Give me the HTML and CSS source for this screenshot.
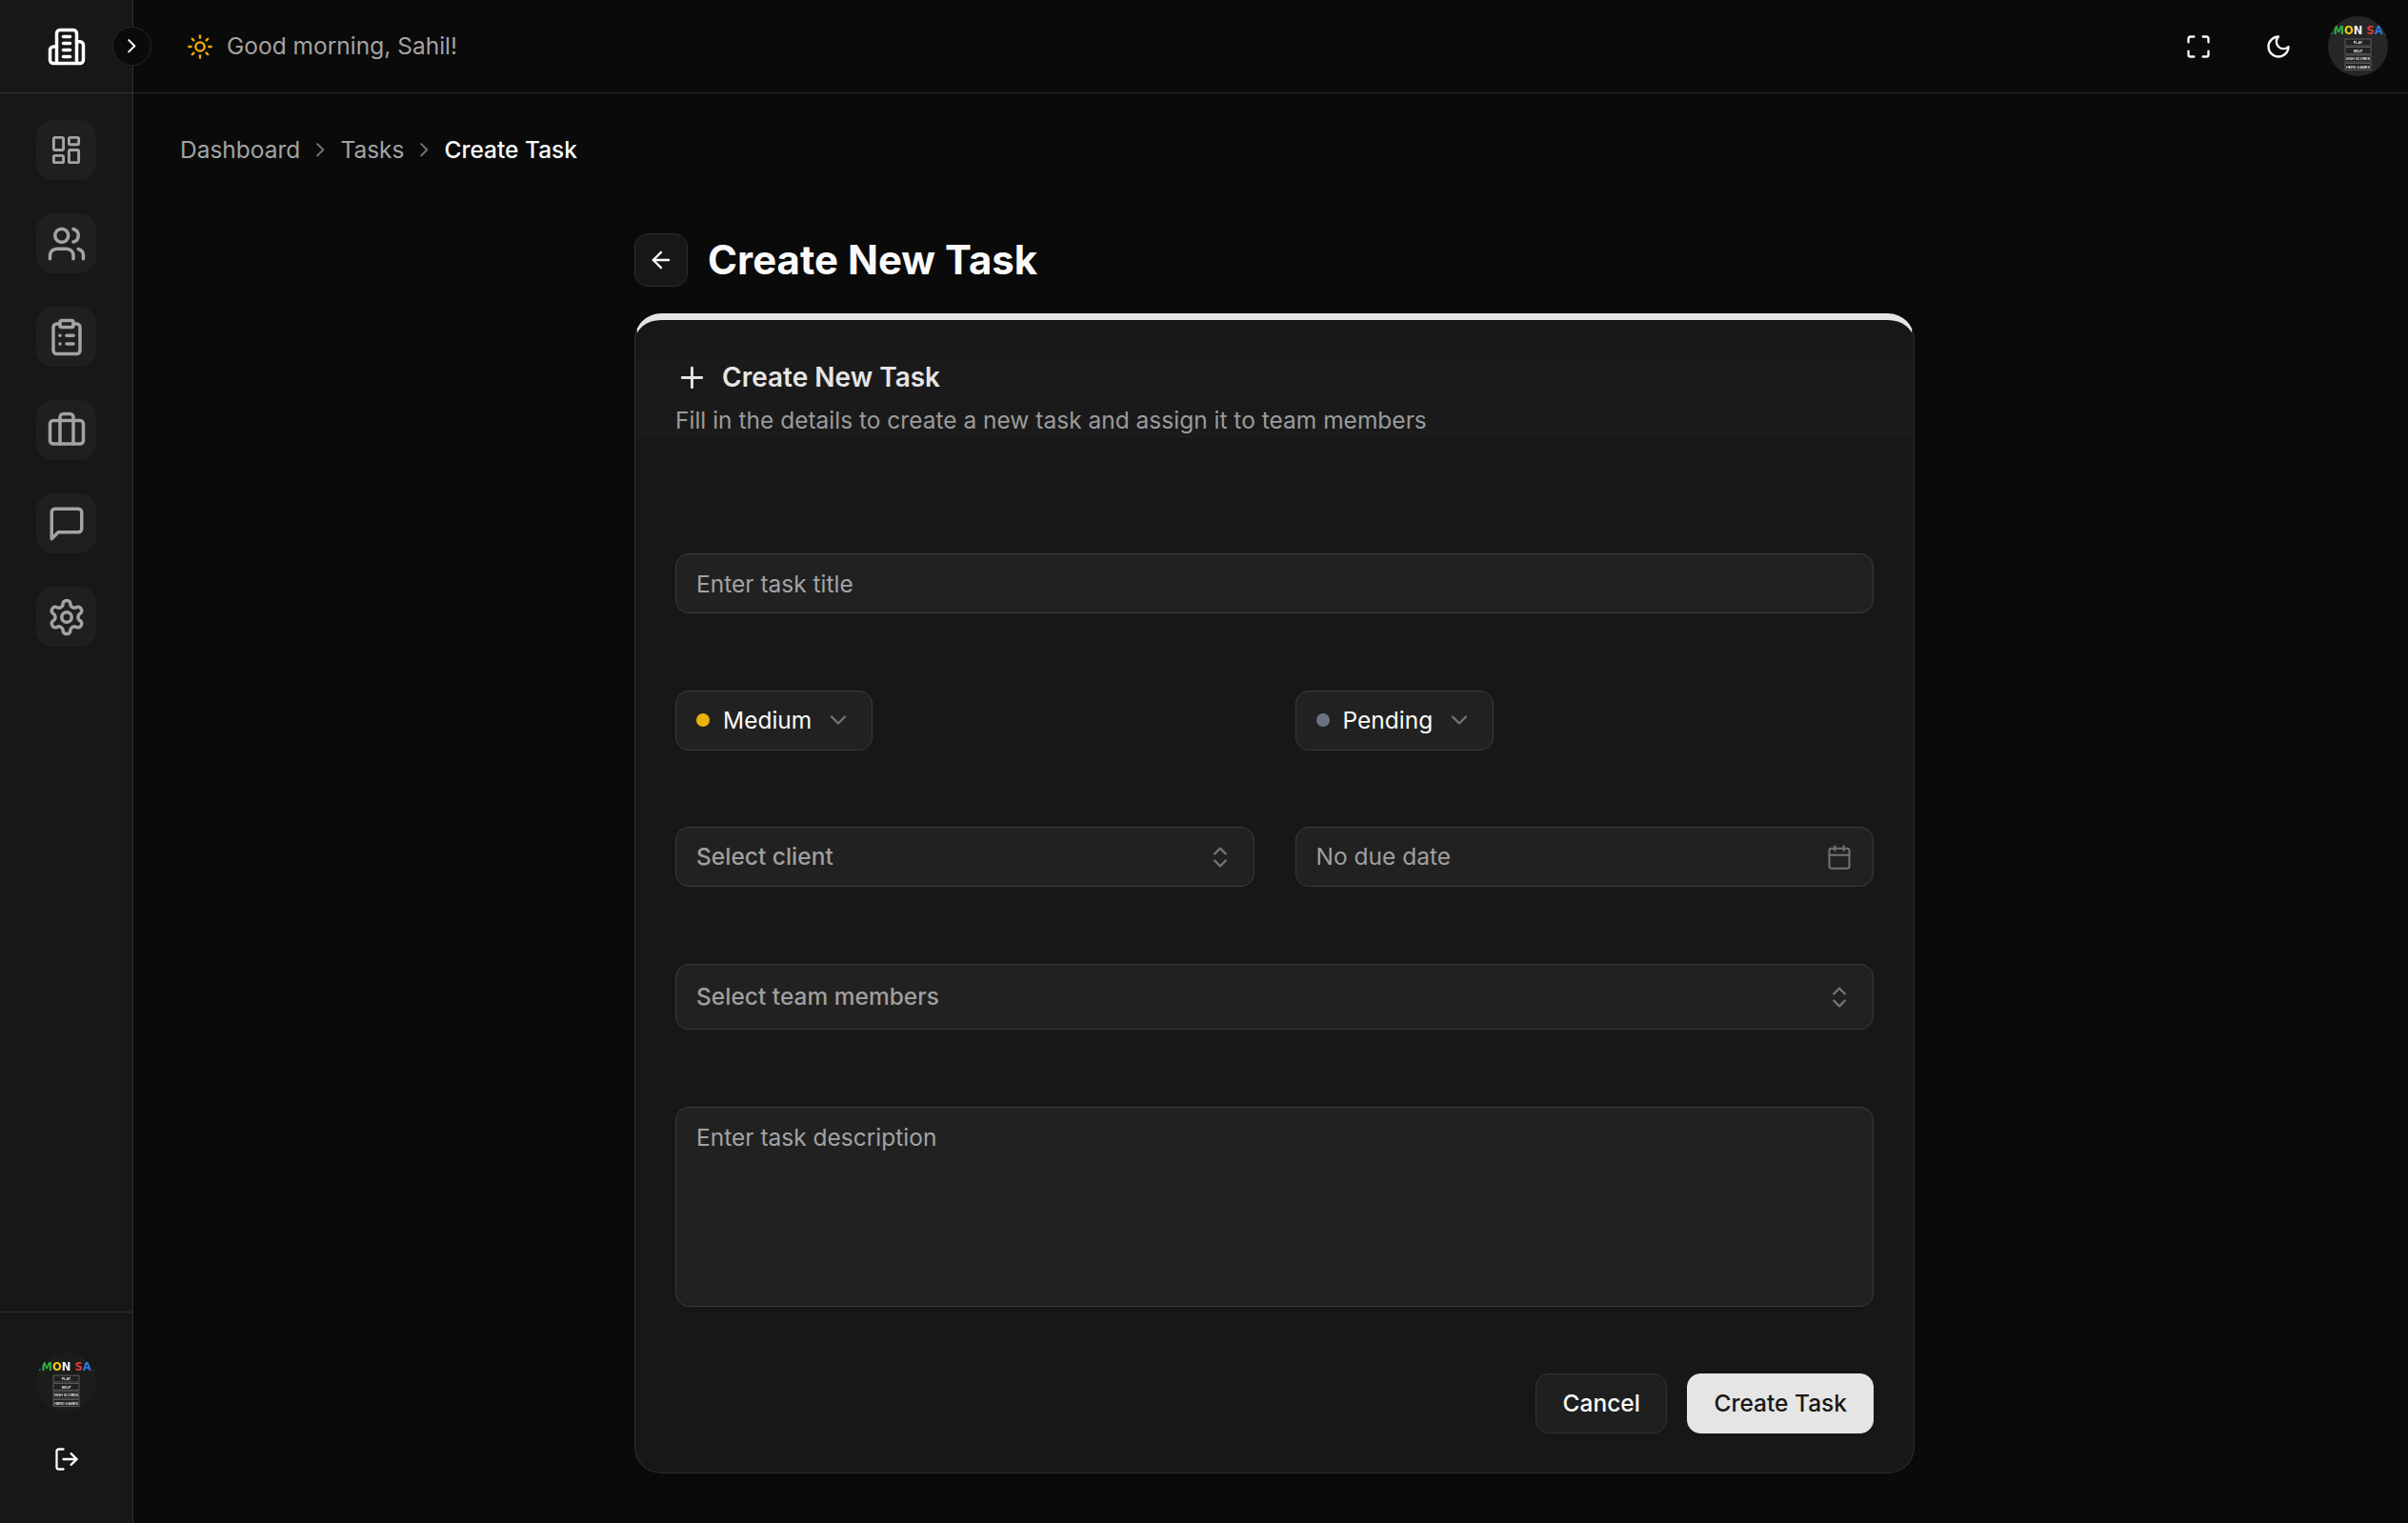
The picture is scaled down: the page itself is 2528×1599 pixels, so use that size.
FILE: index.html
```html
<!DOCTYPE html>
<html lang="en">
<head>
<meta charset="utf-8">
<title>Create New Task</title>
<link rel="stylesheet" href="styles.css">
</head>
<body>
<div class="app">
  <aside class="sidebar">
    <div class="brand">
      <svg class="icon brand-icon" viewBox="0 0 24 24"><path d="M6 22V4a2 2 0 0 1 2-2h8a2 2 0 0 1 2 2v18Z"/><path d="M6 12H4a2 2 0 0 0-2 2v6a2 2 0 0 0 2 2h2"/><path d="M18 9h2a2 2 0 0 1 2 2v9a2 2 0 0 1-2 2h-2"/><path d="M10 6h4"/><path d="M10 10h4"/><path d="M10 14h4"/><path d="M10 18h4"/></svg>
    </div>
    <nav class="nav">
      <a class="tile"><svg class="icon icon-dash" viewBox="0 0 24 24"><rect width="7" height="9" x="3" y="3" rx="1"/><rect width="7" height="5" x="14" y="3" rx="1"/><rect width="7" height="9" x="14" y="12" rx="1"/><rect width="7" height="5" x="3" y="16" rx="1"/></svg></a>
      <a class="tile"><svg class="icon icon-nav" viewBox="0 0 24 24"><path d="M16 21v-2a4 4 0 0 0-4-4H6a4 4 0 0 0-4 4v2"/><circle cx="9" cy="7" r="4"/><path d="M22 21v-2a4 4 0 0 0-3-3.87"/><path d="M16 3.13a4 4 0 0 1 0 7.75"/></svg></a>
      <a class="tile"><svg class="icon icon-nav" viewBox="0 0 24 24"><rect width="8" height="4" x="8" y="2" rx="1"/><path d="M16 4h2a2 2 0 0 1 2 2v14a2 2 0 0 1-2 2H6a2 2 0 0 1-2-2V6a2 2 0 0 1 2-2h2"/><path d="M12 11h4"/><path d="M12 16h4"/><path d="M8 11h.01"/><path d="M8 16h.01"/></svg></a>
      <a class="tile"><svg class="icon icon-nav" viewBox="0 0 24 24"><path d="M16 20V4a2 2 0 0 0-2-2h-4a2 2 0 0 0-2 2v16"/><rect width="20" height="14" x="2" y="6" rx="2"/></svg></a>
      <a class="tile"><svg class="icon icon-nav" viewBox="0 0 24 24"><path d="M21 15a2 2 0 0 1-2 2H7l-4 4V5a2 2 0 0 1 2-2h14a2 2 0 0 1 2 2z"/></svg></a>
      <a class="tile"><svg class="icon icon-nav" viewBox="0 0 24 24"><path d="M12.22 2h-.44a2 2 0 0 0-2 2v.18a2 2 0 0 1-1 1.73l-.43.25a2 2 0 0 1-2 0l-.15-.08a2 2 0 0 0-2.73.73l-.22.38a2 2 0 0 0 .73 2.73l.15.1a2 2 0 0 1 1 1.72v.51a2 2 0 0 1-1 1.74l-.15.09a2 2 0 0 0-.73 2.73l.22.38a2 2 0 0 0 2.73.73l.15-.08a2 2 0 0 1 2 0l.43.25a2 2 0 0 1 1 1.73V20a2 2 0 0 0 2 2h.44a2 2 0 0 0 2-2v-.18a2 2 0 0 1 1-1.73l.43-.25a2 2 0 0 1 2 0l.15.08a2 2 0 0 0 2.73-.73l.22-.39a2 2 0 0 0-.73-2.73l-.15-.08a2 2 0 0 1-1-1.74v-.5a2 2 0 0 1 1-1.74l.15-.09a2 2 0 0 0 .73-2.73l-.22-.38a2 2 0 0 0-2.73-.73l-.15.08a2 2 0 0 1-2 0l-.43-.25a2 2 0 0 1-1-1.73V4a2 2 0 0 0-2-2z"/><circle cx="12" cy="12" r="3"/></svg></a>
    </nav>
    <div class="side-foot">
      <div class="avatar avatar-side">
        <svg class="avatar-img" viewBox="0 0 63 63">
          <text class="art-title" x="31.5" y="19" text-anchor="middle"><tspan fill="#1d6fd0">.</tspan><tspan fill="#2fb344">M</tspan><tspan fill="#f2c811">O</tspan><tspan fill="#f2f2f2">N</tspan> <tspan fill="#e5393a">S</tspan><tspan fill="#2b78e4">A</tspan><tspan fill="#22a050">\</tspan></text>
          <rect class="art-box" x="18" y="24" width="27" height="7"/><rect class="art-box" x="18" y="32.5" width="27" height="7"/><rect class="art-box" x="18" y="41" width="27" height="7"/><rect class="art-box" x="18" y="49.5" width="27" height="7"/>
          <text class="art-label" x="31.5" y="29" text-anchor="middle">PLAY</text><text class="art-label" x="31.5" y="37.5" text-anchor="middle">HELP</text><text class="art-label" x="31.5" y="46" text-anchor="middle">HIGH SCORES</text><text class="art-label" x="31.5" y="54.5" text-anchor="middle">HERO GAMES</text>
        </svg>
      </div>
      <svg class="icon icon-28 white" viewBox="0 0 24 24"><path d="M9 21H5a2 2 0 0 1-2-2V5a2 2 0 0 1 2-2h4"/><path d="m16 17 5-5-5-5"/><path d="M21 12H9"/></svg>
    </div>
  </aside>

  <div class="column">
    <header class="topbar">
      <button class="collapse" type="button"><svg class="icon icon-24 white" viewBox="0 0 24 24"><path d="m9 18 6-6-6-6"/></svg></button>
      <div class="greeting">
        <svg class="icon icon-28 amber" viewBox="0 0 24 24"><circle cx="12" cy="12" r="4"/><path d="M12 2v2"/><path d="M12 20v2"/><path d="m4.93 4.93 1.41 1.41"/><path d="m17.66 17.66 1.41 1.41"/><path d="M2 12h2"/><path d="M20 12h2"/><path d="m6.34 17.66-1.41 1.41"/><path d="m19.07 4.93-1.41 1.41"/></svg>
        <span>Good morning, Sahil!</span>
      </div>
      <div class="top-actions">
        <span class="top-btn"><svg class="icon icon-28 white" viewBox="0 0 24 24"><path d="M8 3H5a2 2 0 0 0-2 2v3"/><path d="M21 8V5a2 2 0 0 0-2-2h-3"/><path d="M3 16v3a2 2 0 0 0 2 2h3"/><path d="M16 21h3a2 2 0 0 0 2-2v-3"/></svg></span>
        <span class="top-btn"><svg class="icon icon-28 white" viewBox="0 0 24 24"><path d="M12 3a6 6 0 0 0 9 9 9 9 0 1 1-9-9Z"/></svg></span>
        <div class="avatar avatar-top">
          <svg class="avatar-img" viewBox="0 0 63 63">
            <text class="art-title" x="31.5" y="19" text-anchor="middle"><tspan fill="#1d6fd0">.</tspan><tspan fill="#2fb344">M</tspan><tspan fill="#f2c811">O</tspan><tspan fill="#f2f2f2">N</tspan> <tspan fill="#e5393a">S</tspan><tspan fill="#2b78e4">A</tspan><tspan fill="#22a050">\</tspan></text>
            <rect class="art-box" x="18" y="24" width="27" height="7"/><rect class="art-box" x="18" y="32.5" width="27" height="7"/><rect class="art-box" x="18" y="41" width="27" height="7"/><rect class="art-box" x="18" y="49.5" width="27" height="7"/>
            <text class="art-label" x="31.5" y="29" text-anchor="middle">PLAY</text><text class="art-label" x="31.5" y="37.5" text-anchor="middle">HELP</text><text class="art-label" x="31.5" y="46" text-anchor="middle">HIGH SCORES</text><text class="art-label" x="31.5" y="54.5" text-anchor="middle">HERO GAMES</text>
          </svg>
        </div>
      </div>
    </header>

    <main class="main">
      <ol class="crumbs">
        <li>Dashboard</li>
        <li class="crumb-sep"><svg class="icon" viewBox="0 0 24 24"><path d="m9 18 6-6-6-6"/></svg></li>
        <li>Tasks</li>
        <li class="crumb-sep"><svg class="icon" viewBox="0 0 24 24"><path d="m9 18 6-6-6-6"/></svg></li>
        <li class="crumb-current">Create Task</li>
      </ol>

      <section class="content">
        <div class="title-row">
          <button class="back" type="button"><svg class="icon icon-28 white" viewBox="0 0 24 24"><path d="m12 19-7-7 7-7"/><path d="M19 12H5"/></svg></button>
          <h1>Create New Task</h1>
        </div>

        <div class="card">
          <div class="card-head">
            <h2><svg class="icon icon-35" viewBox="0 0 24 24"><path d="M5 12h14"/><path d="M12 5v14"/></svg>Create New Task</h2>
            <p>Fill in the details to create a new task and assign it to team members</p>
          </div>

          <form class="form">
            <input class="field" type="text" placeholder="Enter task title">

            <div class="two">
              <div><button class="pill" type="button"><span class="dot dot-medium"></span>Medium<svg class="icon icon-28 muted" viewBox="0 0 24 24"><path d="m6 9 6 6 6-6"/></svg></button></div>
              <div><button class="pill" type="button"><span class="dot dot-pending"></span>Pending<svg class="icon icon-28 muted" viewBox="0 0 24 24"><path d="m6 9 6 6 6-6"/></svg></button></div>
            </div>

            <div class="two two-dates">
              <div class="field select">Select client<svg class="icon icon-28 muted" viewBox="0 0 24 24"><path d="m7 15 5 5 5-5"/><path d="m7 9 5-5 5 5"/></svg></div>
              <div class="field select field-date">No due date<svg class="icon icon-28 muted thin" viewBox="0 0 24 24"><path d="M8 2v4"/><path d="M16 2v4"/><rect width="18" height="18" x="3" y="4" rx="2"/><path d="M3 10h18"/></svg></div>
            </div>

            <div class="field select field-tall">Select team members<svg class="icon icon-28 muted" viewBox="0 0 24 24"><path d="m7 15 5 5 5-5"/><path d="m7 9 5-5 5 5"/></svg></div>

            <textarea class="field area" placeholder="Enter task description"></textarea>

            <div class="actions">
              <button class="btn btn-ghost" type="button">Cancel</button>
              <button class="btn btn-solid" type="button">Create Task</button>
            </div>
          </form>
        </div>
      </section>
    </main>
  </div>
</div>
</body>
</html>
```
FILE: styles.css
```css
* { box-sizing: border-box; }
html, body { margin: 0; height: 100%; }
body {
  background: #0a0a0a;
  color: #fafafa;
  font-family: Inter, "Liberation Sans", sans-serif;
  font-size: 24.5px;
  line-height: 35px;
  overflow: hidden;
}
button, input, textarea { font: inherit; color: inherit; }

.icon {
  display: block;
  flex: none;
  fill: none;
  stroke: currentColor;
  stroke-width: 2;
  stroke-linecap: round;
  stroke-linejoin: round;
}
.icon-24 { width: 24.5px; height: 24.5px; }
.icon-28 { width: 28px; height: 28px; }
.icon-35 { width: 35px; height: 35px; }
.white { color: #fafafa; }
.amber { color: #f5b000; }
.muted { color: #737373; }
.thin { stroke-width: 1.75; }

.app { display: flex; height: 1599px; }

/* sidebar */
.sidebar {
  width: 140px;
  flex: none;
  display: flex;
  flex-direction: column;
  background: #171717;
  border-right: 1px solid #303030;
}
.brand {
  height: 98px;
  flex: none;
  display: flex;
  align-items: center;
  justify-content: center;
  border-bottom: 1px solid #303030;
}
.brand-icon { width: 42px; height: 42px; color: #fff; }
.nav {
  display: flex;
  flex-direction: column;
  align-items: center;
  gap: 35px;
  padding-top: 28px;
}
.tile {
  width: 63px;
  height: 63px;
  display: flex;
  align-items: center;
  justify-content: center;
  border-radius: 17.5px;
  background: #1f1f1f;
  color: #a3a3a3;
}
.icon-nav { width: 42px; height: 42px; }
.icon-dash { width: 35px; height: 35px; }
.side-foot {
  margin-top: auto;
  height: 222px;
  display: flex;
  flex-direction: column;
  align-items: center;
  gap: 35px;
  padding-top: 42px;
  border-top: 1px solid #303030;
}

/* avatar */
.avatar {
  width: 63px;
  height: 63px;
  flex: none;
  border-radius: 50%;
  overflow: hidden;
}
.avatar-top { background: #262626; }
.avatar-side { background: #1b1d1b; }
.avatar-img { display: block; width: 63px; height: 63px; filter: blur(0.5px); }
.art-title { font-family: "DejaVu Sans", sans-serif; font-weight: 700; font-size: 11.5px; fill: #777; }
.art-box { fill: #222; stroke: #5f5f5f; stroke-width: 0.9; }
.art-label { font-family: "Liberation Sans", sans-serif; font-weight: 700; font-size: 3.6px; fill: #e6e6e6; }

/* top bar */
.column { flex: 1; min-width: 0; display: flex; flex-direction: column; }
.topbar {
  position: relative;
  height: 98px;
  flex: none;
  display: flex;
  align-items: center;
  justify-content: space-between;
  padding: 0 21px 0 56px;
  border-bottom: 1px solid #262626;
}
.collapse {
  position: absolute;
  left: -22px;
  top: 28px;
  width: 41px;
  height: 41px;
  padding: 0;
  display: flex;
  align-items: center;
  justify-content: center;
  border-radius: 50%;
  background: #0a0a0a;
  border: 1px solid #262626;
}
.greeting { display: flex; align-items: center; gap: 14px; color: #a3a3a3; }
.top-actions { display: flex; align-items: center; gap: 21px; }
.top-btn { width: 63px; height: 63px; display: flex; align-items: center; justify-content: center; }

/* main */
.main { flex: 1; padding: 42px 41px 0 49px; }
.crumbs {
  list-style: none;
  margin: 0;
  padding: 0;
  display: flex;
  align-items: center;
  gap: 8.75px;
  color: #a3a3a3;
}
.crumb-sep { color: #737373; }
.crumb-sep .icon { width: 24.5px; height: 24.5px; }
.crumb-current { color: #fafafa; font-weight: 500; }

.content { width: 1344px; margin: 70px auto 0; }
.title-row { display: flex; align-items: center; gap: 21px; height: 56px; }
.back {
  width: 56px;
  height: 56px;
  padding: 0;
  display: flex;
  align-items: center;
  justify-content: center;
  background: #171717;
  border: 1px solid #2e2e2e;
  border-radius: 14px;
}
h1 { margin: 0; font-size: 42px; line-height: 56px; font-weight: 700; color: #fafafa; }

/* card */
.card {
  margin-top: 28px;
  height: 1218px;
  background: #171717;
  border: 1px solid #2e2e2e;
  border-top: 7px solid #e5e5e5;
  border-radius: 28px;
}
.card-head {
  margin-top: 42px;
  height: 82px;
  padding: 1px 42px 0;
  background: #1a1a1a;
}
h2 {
  margin: 0;
  display: flex;
  align-items: center;
  gap: 14px;
  font-size: 28px;
  line-height: 35px;
  font-weight: 600;
  color: #e5e5e5;
}
.card-head p { margin: 10px 0 0; color: #9b9b9b; }

/* form */
.form {
  display: flex;
  flex-direction: column;
  gap: 81px;
  padding: 121px 42px 0;
}
.field {
  display: block;
  width: 100%;
  height: 63px;
  padding: 0 21px;
  background: #212121;
  border: 1px solid #3b3b3b;
  border-radius: 14px;
  color: #a3a3a3;
  outline: none;
}
.field::placeholder { color: #a3a3a3; opacity: 1; }
.select { display: flex; align-items: center; justify-content: space-between; font-weight: 500; color: #9f9f9f; }
.field-date { font-weight: 400; }
.two { display: grid; grid-template-columns: 1fr 1fr; gap: 43px; }
.two-dates { margin-top: -1px; }
.field-tall { height: 69px; }
.area { height: 210px; padding: 14px 21px; line-height: 35px; resize: none; }

.pill {
  height: 63px;
  display: inline-flex;
  align-items: center;
  padding: 0 21px 1px;
  background: #212121;
  border: 1px solid #3b3b3b;
  border-radius: 14px;
  font-weight: 400;
  color: #fafafa;
}
.pill .icon { margin-left: 14px; }
.dot { width: 14px; height: 14px; border-radius: 50%; margin-right: 14px; }
.dot-medium { background: #eab308; }
.dot-pending { background: #6b7280; }

.actions { display: flex; justify-content: flex-end; gap: 21px; margin-top: -11px; }
.btn {
  height: 63px;
  padding: 0 27.5px;
  border-radius: 14px;
  font-weight: 500;
}
.btn-ghost { background: #1f1f1f; border: 1px solid #333; color: #fafafa; }
.btn-solid { padding: 0 27px; background: #e5e5e5; border: 1px solid #e5e5e5; color: #171717; }
```
